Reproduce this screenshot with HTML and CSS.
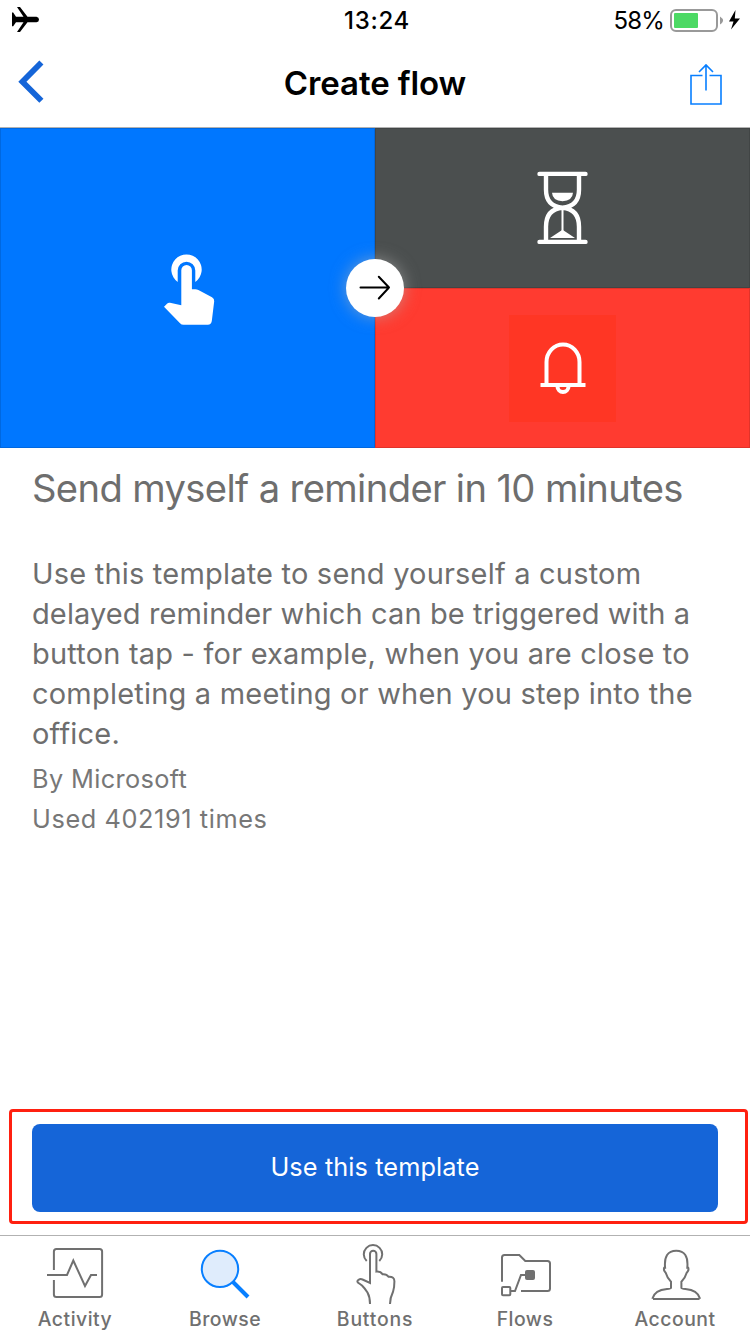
FILE: index.html
```
<!DOCTYPE html>
<html lang="en">
<head>
<meta charset="utf-8">
<title>Create flow</title>
<link rel="stylesheet" href="styles.css">
</head>
<body>
<div class="screen">
  <header class="status">
    <svg class="plane" width="28" height="26" viewBox="0 0 28 26"><path d="M0 5.500h1.200L4 9.700h7.500L5 0h3L15.500 9.700H24.500q2.500.4 2.500 2.800t-2.500 2.800h-9L8 25H5l6.500-9.700H4L1.200 19.200H0Z"/></svg>
    <span class="time">13:24</span>
    <div class="power">
      <span class="percent">58%</span>
      <svg width="72" height="24" viewBox="0 0 72 24"><rect x="1" y="2" width="46" height="21" rx="5" fill="none" stroke="#999" stroke-width="2"/><rect x="4" y="5" width="24" height="15" rx="1" fill="#4cd964"/><path d="M50 8.500q6 4 0 8Z" fill="#999"/><path d="M65.500 2 59 13.500h4.500L61 21.500 70 10.500h-5.200Z"/></svg>
    </div>
  </header>
  <nav class="nav">
    <svg class="back" width="28" height="44" viewBox="0 0 28 44"><path d="M24.400 2.500 5.400 21.700l19 19" fill="none" stroke="#1565d8" stroke-width="5.800"/></svg>
    <h1 class="nav-title">Create flow</h1>
    <svg class="share" width="34" height="42" viewBox="0 0 34 42"><path d="M13.500 12.500H2v28.500h30V12.500H20.500M17 27.500V2.500M10 9 17 2l7 7" fill="none" stroke="#087fff" stroke-width="1.600"/></svg>
  </nav>
  <section class="hero">
    <div class="tile tile-trigger">
      <svg width="53" height="72" viewBox="0 0 53 72" fill="#fff"><path d="M16.700 30a15.200 15.200 0 1 1 17.600 0V18.500a8.800 8.800 0 0 0-17.600 0Z"/><path d="M20.300 53.300v-35a5.300 5.300 0 0 1 10.600 0v19h3.500q1.500 0 3 .8L51 45.200q2.500 1.300 2.200 4L50.800 69q-.5 3.700-4 3.700H22.500q-2 0-3.500-1.500L3 54.700l3-3q1.200-1.200 3-.9Z"/></svg>
    </div>
    <div class="tile tile-delay">
      <svg width="52" height="76" viewBox="0.5 0.3 52 76" fill="none" stroke="#fff" stroke-width="4.400" stroke-linecap="round"><path d="M3 4.200h46M3 72.200h46"/><path d="M9.500 4v16q0 16.500 16.500 18 16.500-1.500 16.500-18V4M9.500 72V57q0-17.500 16.500-19 16.500 1.500 16.500 19v15" stroke-linecap="butt"/><path d="M15.500 23h21q-.5 8-10.500 8.500-10-.5-10.500-8.500ZM26 60l12.500 8.300h-25Z" fill="#fff" stroke="none"/><path d="M26 40v21" stroke-width="2"/></svg>
    </div>
    <div class="tile tile-notify">
      <div class="bell-box">
        <svg width="48" height="54" viewBox="0 0 48 54" fill="none" stroke="#fff" stroke-width="4"><path d="M1.500 44h45M7.500 44V21a16.500 17.500 0 0 1 33 0V44M18.500 45.500a5.500 5.500 0 0 0 11 0"/></svg>
      </div>
    </div>
    <div class="arrow">
      <svg width="32" height="26" viewBox="0 0 32 26" fill="none" stroke="#000" stroke-width="2" stroke-linecap="round" stroke-linejoin="round"><path d="M1.500 12.500H30M19.800 1.700 30 12.500 19.800 23.500"/></svg>
    </div>
  </section>
  <main class="content">
    <h2 class="heading">Send myself a reminder in 10 minutes</h2>
    <p class="description">Use this template to send yourself a custom<br><span class="snug">delayed reminder which can be triggered with a</span><br>button tap - for example, when you are close to<br>completing a meeting or when you step into the<br>office.</p>
    <p class="meta">By Microsoft</p>
    <p class="meta usage">Used 402191 times</p>
  </main>
  <div class="callout"><button class="primary">Use this template</button></div>
  <footer class="tabs">
    <div class="tab">
      <svg class="tab-icon" width="60" height="60" viewBox="0 0 60 60"><path d="M8.900 26V7.400q0-2.500 2.500-2.500h43.200q2.500 0 2.500 2.500v43.200q0 2.500-2.500 2.500H11.400q-2.500 0-2.500-2.500V36M2 31h20l6.300-14.500L40 42l6-11h6"/></svg>
      <span>Activity</span>
    </div>
    <div class="tab">
      <svg class="tab-icon active" width="60" height="60" viewBox="0 0 60 60"><circle cx="25" cy="24.900" r="18.200"/><path d="m38 38 15 15" stroke-width="4"/></svg>
      <span>Browse</span>
    </div>
    <div class="tab">
      <svg class="tab-icon" width="60" height="60" viewBox="0 0 60 60"><path d="M21.700 17a9.200 9.200 0 1 1 12.600 0M25 60q0-7-2.500-11.500-2.500-4-5.500-7-2-1.500-4.200-3-1-1.500.7-2.700 2-1.200 4-.3l7.500 3.500V10a3.200 3.200 0 0 1 6.400 0v17.500q4-.5 6.100 2.800 4-.5 6 2.500 6-.5 5.900 4.700 0 6-1.300 10Q45 54 45 60"/></svg>
      <span class="loose">Buttons</span>
    </div>
    <div class="tab">
      <svg class="tab-icon" width="60" height="60" viewBox="0 0 60 60"><path d="M7 37.700V13.500Q7 11 9.500 11h14.800l6 6h22.200q2.500 0 2.500 2.500v25q0 2.500-2.500 2.500H26M15.500 47H20l6-16h5"/><rect x="7" y="42.900" width="8.300" height="8.300" rx="1"/><rect x="30" y="26" width="10" height="10" rx="2" fill="#707070" stroke="none"/></svg>
      <span>Flows</span>
    </div>
    <div class="tab">
      <svg class="tab-icon" width="60" height="60" viewBox="0 0 60 60"><path d="M8 55h46.500M7.300 54.800Q9.500 46 22 45q3.800-.3 4-1v-6.300q-3.800-3.700-5.300-9-2.500-2.500-1.500-5h.9Q18.500 6.800 31.200 6.800T42.300 23.700h.9q1 2.500-1.500 5-1.500 5.300-5.300 9V44q.2.700 4 1 12.500 1 14.700 9.800"/></svg>
      <span>Account</span>
    </div>
  </footer>
</div>
</body>
</html>
```
FILE: styles.css
```
* { box-sizing: border-box; margin: 0; padding: 0; }
body { font-family: Inter, "Liberation Sans", sans-serif; background: #fff; color: #000; }
.screen { width: 750px; height: 1334px; display: flex; flex-direction: column; }
.status { height: 40px; display: grid; grid-template-columns: 1fr auto 1fr; align-items: center; padding: 0 8px 0 12px; }
.time { font-size: 24px; font-weight: 500; letter-spacing: .7px; }
.power { display: flex; justify-content: flex-end; align-items: center; gap: 6px; }
.percent { font-size: 24px; letter-spacing: -.8px; }
.nav { height: 88px; border-bottom: 1px solid #b2b2b2; display: grid; grid-template-columns: 1fr auto 1fr; align-items: center; padding: 0 17px 2px; }
.nav-title { font-size: 33px; font-weight: 600; letter-spacing: -.1px; }
.back { margin-bottom: 2px; }
.share { justify-self: end; margin: 3px 10px 0 0; }
.hero { position: relative; height: 320px; display: grid; grid-template-columns: 1fr 1fr; grid-template-rows: 1fr 1fr; }
.tile { display: flex; align-items: center; justify-content: center; box-shadow: inset 0 0 0 1px rgba(0, 0, 0, .12); }
.tile svg { overflow: visible; }
.tile-trigger { grid-row: span 2; background: #0077ff; }
.tile-delay { background: #4b4f4f; }
.tile-notify { background: #ff3b30; }
.bell-box { width: 107px; height: 107px; background: #ff3624; display: flex; align-items: center; justify-content: center; }
.arrow { position: absolute; left: 346px; top: 131px; width: 58px; height: 58px; border-radius: 50%; background: #fff; display: flex; align-items: center; justify-content: center; box-shadow: 0 0 16px rgba(180, 180, 180, .6); }
.content { flex: 1; padding: 16px 32px 0; color: #6e6e6e; }
.heading { font-size: 38.2px; font-weight: 400; line-height: 48px; letter-spacing: -.64px; margin-bottom: 42px; white-space: nowrap; }
.description { font-size: 29px; line-height: 40px; letter-spacing: .2px; margin-bottom: 5px; white-space: nowrap; }
.snug { letter-spacing: .11px; }
.meta { font-size: 25.3px; line-height: 40px; letter-spacing: .36px; color: #777; }
.usage { letter-spacing: .6px; }
.callout { margin: 0 2px 11px 9px; height: 115px; padding: 12px 27px 9px 20px; border: 3px solid #ff2010; border-radius: 4px; }
.primary { width: 100%; height: 88px; padding-bottom: 3px; border: 0; border-radius: 8px; background: #1565d8; color: #fff; font-family: inherit; font-size: 25.3px; letter-spacing: .1px; }
.tabs { height: 99px; border-top: 1px solid #b2b2b2; display: grid; grid-template-columns: repeat(5, 1fr); }
.tab { display: flex; flex-direction: column; align-items: center; padding-top: 8px; font-size: 19.4px; font-weight: 500; line-height: 30px; letter-spacing: .5px; color: #707070; }
.loose { letter-spacing: .8px; }
.tab-icon { fill: none; stroke: #707070; stroke-width: 2; }
.active { fill: #dfecfc; stroke: #087fff; }
```
